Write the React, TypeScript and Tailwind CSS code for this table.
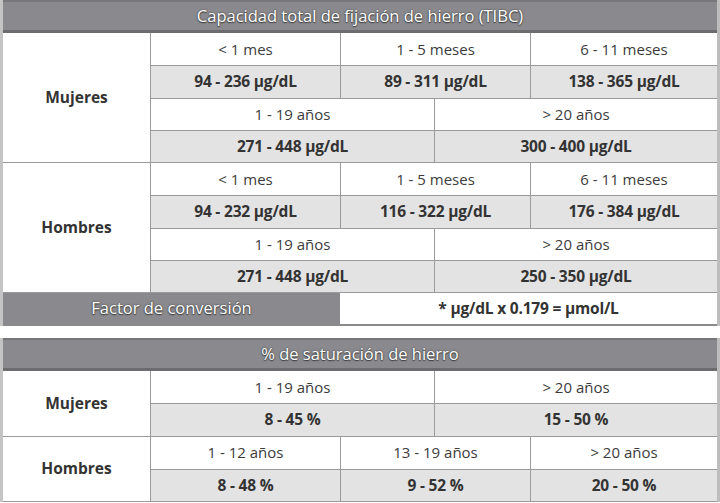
import React from "react";

const font = { fontFamily: '"Open Sans", "Liberation Sans", sans-serif' };

function Cell({ children, shade, bold, left }: { children: React.ReactNode; shade?: boolean; bold?: boolean; left?: boolean }) {
  return (
    <div
      className={
        "flex items-center justify-center h-full " +
        (left ? "border-l border-[#9a9a9a] " : "") +
        (shade ? "bg-[#e3e3e3] " : "bg-white ") +
        (bold ? "font-bold text-[15.5px] text-[#333] tracking-[-0.2px]" : "text-[15px] text-[#3c3c3c]")
      }
    >
      {children}
    </div>
  );
}

function Header({ children }: { children: React.ReactNode }) {
  return (
    <div className="h-[33px] flex items-center justify-center bg-[#8a8a8e] border-t-2 border-t-[#77777a] border-b-[3px] border-b-[#6c6c6e] text-white text-[16.5px] [text-shadow:0_0_2px_#333,0_1px_1px_#444]">
      {children}
    </div>
  );
}

function Block({ label, rows }: { label: string; rows: { cols: string[]; shade: boolean }[] }) {
  return (
    <div className="grid grid-cols-[148px_1fr] border-b border-[#9a9a9a]">
      <div className="flex items-center justify-center font-bold text-[15.5px] text-[#333] bg-white border-r border-[#9a9a9a]">
        {label}
      </div>
      <div className="flex flex-col">
        {rows.map((r, i) => (
          <div
            key={i}
            className={
              "h-[32.25px] grid " +
              (i > 0 ? "border-t border-[#9a9a9a] " : "") +
              (r.cols.length === 3 ? "grid-cols-[189px_190px_1fr]" : r.cols.length === 2 ? "grid-cols-[283px_1fr]" : "grid-cols-1")
            }
          >
            {r.cols.map((c, j) => (
              <Cell key={j} shade={r.shade} bold={r.shade} left={j > 0}>
                {c}
              </Cell>
            ))}
          </div>
        ))}
      </div>
    </div>
  );
}

export default function App() {
  return (
    <div className="w-[720px] h-[503px] bg-white overflow-hidden" style={font}>
      <div className="border-l-[3px] border-l-[#c4c4c4] border-r-[3px] border-r-[#bdbdbd]">
        <Header>Capacidad total de fijación de hierro (TIBC)</Header>
        <Block
          label="Mujeres"
          rows={[
            { cols: ["< 1 mes", "1 - 5 meses", "6 - 11 meses"], shade: false },
            { cols: ["94 - 236 µg/dL", "89 - 311 µg/dL", "138 - 365 µg/dL"], shade: true },
            { cols: ["1 - 19 años", "> 20 años"], shade: false },
            { cols: ["271 - 448 µg/dL", "300 - 400 µg/dL"], shade: true },
          ]}
        />
        <Block
          label="Hombres"
          rows={[
            { cols: ["< 1 mes", "1 - 5 meses", "6 - 11 meses"], shade: false },
            { cols: ["94 - 232 µg/dL", "116 - 322 µg/dL", "176 - 384 µg/dL"], shade: true },
            { cols: ["1 - 19 años", "> 20 años"], shade: false },
            { cols: ["271 - 448 µg/dL", "250 - 350 µg/dL"], shade: true },
          ]}
        />
        <div className="h-[33px] grid grid-cols-[337px_1fr] border-b-2 border-b-[#8a8a8a]">
          <div className="flex items-center justify-center bg-[#8a8a8e] text-white text-[16.5px] [text-shadow:0_0_2px_#333,0_1px_1px_#444]">
            Factor de conversión
          </div>
          <div className="flex items-center justify-center bg-white font-bold text-[15.5px] text-[#333] tracking-[-0.2px]">
            * µg/dL x 0.179 = µmol/L
          </div>
        </div>
      </div>

      <div className="h-[12px]" />

      <div className="border-l-[3px] border-l-[#c4c4c4] border-r-[3px] border-r-[#bdbdbd]">
        <Header>% de saturación de hierro</Header>
        <Block
          label="Mujeres"
          rows={[
            { cols: ["1 - 19 años", "> 20 años"], shade: false },
            { cols: ["8 - 45 %", "15 - 50 %"], shade: true },
          ]}
        />
        <Block
          label="Hombres"
          rows={[
            { cols: ["1 - 12 años", "13 - 19 años", "> 20 años"], shade: false },
            { cols: ["8 - 48 %", "9 - 52 %", "20 - 50 %"], shade: true },
          ]}
        />
      </div>
    </div>
  );
}
